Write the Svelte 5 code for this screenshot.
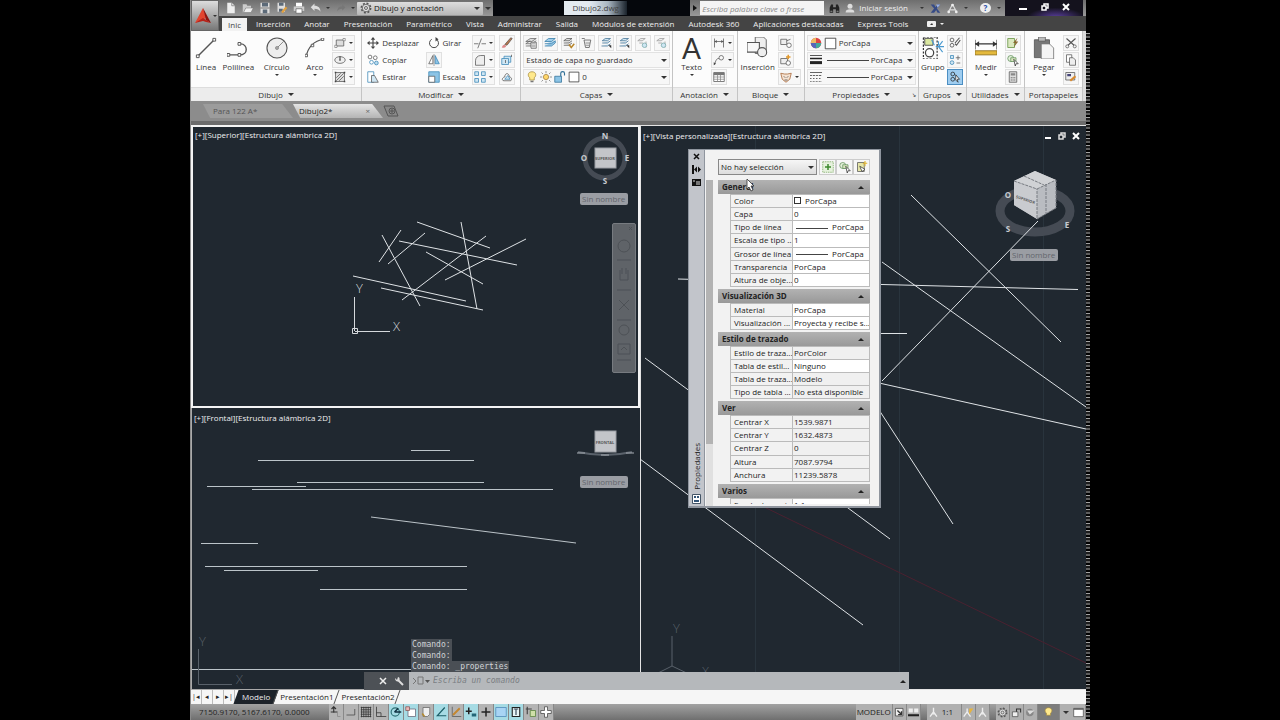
<script lang="ts">
  type Cell = { name: string; value: string; kind?: 'swatch' | 'line'; locked?: boolean };

  // Icon markup, drawn in a 16x16 box.
  const icons: Record<string, string> = {
    new: '<path d="M3 1h6l4 4v10H3z" fill="#eee"/><path d="M9 1v4h4" fill="none" stroke="#777"/>',
    open: '<path d="M1 3h5l1 2h5v3H5l-3 6H1z" fill="#ccc"/><path d="M5 8h10l-3 6H2z" fill="#eee" stroke="#777" stroke-width=".7"/>',
    save: '<path d="M2 1h12v14H2z" fill="#ddd"/><path d="M4 1h8v5H4zM5 10h6v5H5z" fill="#5c6a78"/><path d="M2 8h12" stroke="#555"/>',
    saveas: '<path d="M2 1h10v12H2z" fill="#ddd"/><path d="M4 1h6v4H4zM4 9h5v4H4z" fill="#5c6a78"/><path d="M8 14l6-7" stroke="#e0a040" stroke-width="3"/>',
    print: '<path d="M4 1h8v5H4z" fill="#fff"/><path d="M1 6h14v6H1z" fill="#ccc"/><path d="M4 9h8v6H4z" fill="#fff" stroke="#666"/>',
    undo: '<path d="M6 2L1 7l5 5V9c4 0 6 1 8 4 0-5-3-8-8-8z" fill="#ddd"/>',
    redo: '<path d="M10 2l5 5-5 5V9c-4 0-6 1-8 4 0-5 3-8 8-8z" fill="#777"/>',
    gear: '<circle cx="8" cy="8" r="6" fill="none" stroke="#555" stroke-width="2.500" stroke-dasharray="2.500 2.200"/><circle cx="8" cy="8" r="5" fill="#ddd" stroke="#555"/><circle cx="8" cy="8" r="2" fill="none" stroke="#444"/>',
    find: '<path d="M1 14V7l2-5h3v12zM10 14V2h3l2 5v7zM6 6h4v3H6z" fill="#222"/><path d="M2 12h3M11 12h3" stroke="#ccc"/>',
    user: '<circle cx="8" cy="5" r="4" fill="#ddd"/><path d="M1 15c0-4 3-5 7-5s7 1 7 5z" fill="#ddd"/>',
    exchange: '<path d="M1 2l5 6-5 6h5l3-4 2 4h4l-5-6 5-6h-4L8 6 6 2z" fill="#354a86"/><path d="M9 2h6l-4 5" fill="#9db4e6"/>',
    share: '<path d="M8 2L2 13M8 2l6 11M4 10h8" stroke="#ddd" fill="none" stroke-width="1.600"/><circle cx="8" cy="3" r="2" fill="#eee"/><circle cx="2.500" cy="13" r="2" fill="#eee"/><circle cx="13.500" cy="13" r="2" fill="#eee"/>',
    line: '<path d="M2 14L14 2" stroke="#555"/><path d="M1 13h2v2H1zM13 1h2v2h-2z" fill="#fff" stroke="#555" stroke-width=".7"/>',
    polyline: '<path d="M1 13h8c7 0 6-8 1-8" stroke="#555" fill="none"/><path d="M0 12h2v2H0zM8 12h2v2H8zM8 4h2v2H8z" fill="#fff" stroke="#555" stroke-width=".7"/>',
    circle: '<circle cx="8" cy="8" r="7.300" fill="#eee" stroke="#555" stroke-width=".8"/><path d="M8 8l5-5" stroke="#888" stroke-width=".7"/><path d="M7.200 7.200h1.600v1.600H7.200z" fill="#fff" stroke="#555" stroke-width=".6"/>',
    arc: '<path d="M1 15C2 8 7 2 15 1" stroke="#555" fill="none"/><path d="M0 13h2v2H0zM5 5h2v2H5zM13 0h2v2h-2z" fill="#fff" stroke="#555" stroke-width=".7"/>',
    rect: '<path d="M3 4h10v8H3z" fill="#ddd" stroke="#555"/><path d="M12 2h3v3h-3zM1 11h3v3H1z" fill="#fff" stroke="#555" stroke-width=".7"/>',
    ellipse: '<ellipse cx="8" cy="8" rx="7" ry="4.500" fill="#eee" stroke="#555"/><path d="M8 3v6M7 8h2" stroke="#444" stroke-width="1.500"/>',
    hatch: '<path d="M2 2h12v12H2z" fill="#ddd" stroke="#555"/><path d="M3 9l6-6M3 13L13 3M7 13l6-6" stroke="#555"/><path d="M1 1h2v2H1zM13 1h2v2h-2zM1 13h2v2H1zM13 13h2v2h-2z" fill="#444"/>',
    move: '<path d="M8 0l3 3.500H5zM8 16l3-3.500H5zM0 8l3.500-3v6zM16 8l-3.500-3v6z" fill="#444"/><path d="M8 3v10M3 8h10" stroke="#444" stroke-width="1.500"/>',
    copy: '<circle cx="4" cy="4" r="2.500" fill="#fff" stroke="#555"/><circle cx="11" cy="5" r="2.500" fill="#fff" stroke="#555"/><circle cx="6" cy="11" r="2.500" fill="#fff" stroke="#3a86b5"/><circle cx="12.500" cy="12" r="2.500" fill="#b9dcf0" stroke="#3a86b5"/>',
    stretch: '<path d="M1 1h8v14H1z" fill="#fff" stroke="#3a86b5"/><path d="M6 6h4l5 9H6z" fill="#cfe6f3" stroke="#555"/>',
    rotate: '<path d="M11 3a6 6 0 1 1-6 0" fill="none" stroke="#444" stroke-width="1.300"/><path d="M10 0l4 3-4 3z" fill="#444"/>',
    mirror: '<path d="M6.500 2v11H1z" fill="#fff" stroke="#555"/><path d="M9.500 2v11H15z" fill="#8cc4e6" stroke="#3a86b5"/><path d="M8 0v16" stroke="#555" stroke-width=".7"/>',
    scale: '<path d="M1 1h14v14H1z" fill="#8cc4e6" stroke="#3a86b5"/><path d="M1 7h8v8H1z" fill="#fff" stroke="#555"/>',
    trim: '<path d="M0 9h6M10 9h6M5 15l5-13" stroke="#555"/>',
    fillet: '<path d="M2 15V9c0-4 3-7 7-7h5v13z" fill="#eee" stroke="#555"/>',
    array: '<path d="M1 1h5v5H1zM10 1h5v5h-5zM1 10h5v5H1zM10 10h5v5h-5z" fill="#cfe6f3" stroke="#3a86b5"/>',
    erase: '<path d="M5 10L13 1l2 1-7 9z" fill="#b9794f" stroke="#444" stroke-width=".8"/><path d="M1 14c1-3 3-5 5-3s-1 4-5 3z" fill="#d88"/>',
    explode: '<path d="M1 6h9v8H1zM4 6V3h9v8h-3" fill="#cfe6f3" stroke="#3a86b5"/><path d="M6 8v4M14 1v3" stroke="#555"/>',
    offset: '<path d="M4 13h9c3-4-1-5-2-5 0-6-6-6-6 0-3 0-5 5-1 5z" fill="none" stroke="#555"/><path d="M5 11h7l-3-5z" fill="#cfe6f3" stroke="#3a86b5"/>',
    layers: '<path d="M1 6l6-4h8l-6 4zM1 9l6-4M1 9h8l6-4M1 12h8l6-4" fill="#ddd" stroke="#555" stroke-width=".9"/><path d="M8 7h7v8H8z" fill="#fff" stroke="#555"/><path d="M9 9h5M9 11h5M9 13h5" stroke="#666" stroke-width=".8"/>',
    layerBlue: '<path d="M1 6l5-4h9l-5 4zM1 9h9l5-4M1 12h9l5-4v-3" fill="#9fcdea" stroke="#2f78a6"/>',
    layerGold: '<path d="M1 5l4-3h7l-4 3zM1 8h7l4-3M1 11h7l4-3" fill="#ddd" stroke="#555"/><path d="M8 10l3 4 4-5" fill="none" stroke="#b8862b" stroke-width="2"/>',
    layerPlain: '<path d="M4 4h9l-2 10H6zM1 2h4" fill="#eee" stroke="#555"/><path d="M6 8h6M6 11h5" stroke="#777"/>',
    layerArrow: '<path d="M3 5l4-3h7l-4 3zM3 8h7l4-3M2 12h8l4-3" fill="#cfe6f3" stroke="#3f6f91"/><path d="M11 11l4 4v-4z" fill="#333"/>',
    layerGhost: '<path d="M1 5l4-3h6l-4 3zM3 8h5M12 6v8" fill="#eee" stroke="#999"/><circle cx="10" cy="11" r="3" fill="#cfe6f3" stroke="#7aa"/>',
    bulb: '<path d="M8 1c6 0 6 6 3 8v3H5V9C2 7 2 1 8 1z" fill="#ffe98c" stroke="#a58b3c"/><path d="M6 13h4v2H6z" fill="#777"/>',
    sun: '<circle cx="8" cy="8" r="3.500" fill="#ffd76b" stroke="#a5803c"/><path d="M8 0v3M8 13v3M0 8h3M13 8h3M2 2l2 2M12 12l2 2M14 2l-2 2M4 12l-2 2" stroke="#777"/>',
    lock: '<path d="M1 7h9v8H1z" fill="#8cc4e6" stroke="#2f6f97"/><path d="M9 7V3c0-3 5-3 5 0v3" fill="none" stroke="#2f6f97" stroke-width="1.500"/>',
    swatch: '<path d="M1.500 1.500h13v13h-13z" fill="#fff" stroke="#333"/>',
    dim: '<path d="M2 2v12M14 2v12M2 6h12" stroke="#555"/><path d="M2 6l3-2v4zM14 6l-3-2v4z" fill="#555"/>',
    leader: '<circle cx="11" cy="5" r="3" fill="none" stroke="#555"/><path d="M8 6C4 6 4 9 2 14" fill="none" stroke="#555"/><path d="M1 15l0-4 3 2z" fill="#444"/>',
    table: '<path d="M1 2h14v12H1z" fill="#fff" stroke="#555"/><path d="M1 4h14" stroke="#777" stroke-width="3"/><path d="M1 8h14M1 11h14M6 5v9M10 5v9" stroke="#888"/>',
    insert: '<path d="M6 0h6l2 2v10H6z" fill="#eee" stroke="#666" stroke-width=".7"/><path d="M0 4h9v7H0z" fill="#f8f8f8" stroke="#555" stroke-width=".8"/><circle cx="11" cy="11" r="3.300" fill="#eee" stroke="#555" stroke-width=".8"/>',
    block: '<path d="M1 3h8v7H1z" fill="#eee" stroke="#555"/><circle cx="12" cy="11" r="3" fill="#fff" stroke="#555"/><path d="M9 5l5-2" stroke="#555"/>',
    blockEdit: '<path d="M1 6h9v7H1z" fill="#eee" stroke="#555"/><circle cx="11" cy="12" r="3" fill="#fff" stroke="#555"/><path d="M11 1v6M8 4h6" stroke="#e39a2e" stroke-width="2"/>',
    tags: '<path d="M1 3l5 1h4l5-1-2 8-5 4-5-4z" fill="#f6e3d2" stroke="#a4602f"/><path d="M5 7l2 2M11 7L9 9M6 12h4" stroke="#444"/>',
    wheel: '<circle cx="8" cy="8" r="7" fill="#d44"/><path d="M8 8L1 8a7 7 0 0 1 7-7z" fill="#eb6"/><path d="M8 8h7a7 7 0 0 1-7 7z" fill="#4a9"/><path d="M8 8v7a7 7 0 0 1-7-7z" fill="#56b"/>',
    weights: '<path d="M0 2h16" stroke="#222"/><path d="M0 6h16" stroke="#222" stroke-width="2"/><path d="M0 11.500h16" stroke="#222" stroke-width="4"/>',
    types: '<path d="M0 2h16" stroke="#333"/><path d="M0 6h16" stroke="#333" stroke-dasharray="3 1"/><path d="M0 10h16" stroke="#333" stroke-dasharray="2 2"/><path d="M0 14h16" stroke="#333" stroke-dasharray="1 1"/>',
    group: '<path d="M1 0h10v16H1z" fill="none" stroke="#222" stroke-width=".8" stroke-dasharray="1.500 1"/><path d="M2 1h6v5H2z" fill="#dbe8a0" stroke="#555" stroke-width=".7"/><circle cx="5.500" cy="11.500" r="3" fill="#fff" stroke="#444" stroke-width=".9"/><path d="M12 3v3M10 7h6M12 7l3-4M12 7l3 4M9 6l-2-4" stroke="#4a9ad0" stroke-width=".8"/>',
    ungroup: '<circle cx="4" cy="4" r="2.500" fill="none" stroke="#444"/><circle cx="4" cy="11" r="2.500" fill="none" stroke="#444"/><path d="M8 8l6-7M8 9l2 2 5-7" stroke="#555" stroke-width="1.500" fill="none"/>',
    groupEdit: '<path d="M2 2h4v4H2z" fill="#cfe6f3" stroke="#3a86b5"/><circle cx="4" cy="11.500" r="2.500" fill="#cfe6f3" stroke="#3a86b5"/><path d="M9 5h6M12 2v6M10 12h5" stroke="#555"/>',
    groupPick: '<circle cx="5" cy="4" r="2.500" fill="none" stroke="#222"/><circle cx="5" cy="11" r="2.500" fill="none" stroke="#222"/><path d="M9 5l5 6-3 0 1 4-3-3z" fill="#fff" stroke="#222"/>',
    measure: '<path d="M0 2v7M16 2v7M0 5h16" stroke="#333" stroke-width=".8"/><path d="M0 5l3-2v4zM16 5l-3-2v4z" fill="#333"/><path d="M0 10h16v3H0z" fill="#e4b93c" stroke="#8d6d1a" stroke-width=".6"/>',
    quick: '<path d="M1 2h9v12H1z" fill="#dbe8c0" stroke="#5f8f3a"/><path d="M14 1l-6 7h3l-2 6 6-8h-3z" fill="#8a6b33"/>',
    pick: '<circle cx="5" cy="6" r="4" fill="#e4f0da" stroke="#5f8f5a"/><path d="M5 5h7v5H5z" fill="#dbe8c0" stroke="#5f8f5a"/><path d="M9 7l6 6h-3l-1 3z" fill="#fff" stroke="#333"/>',
    calc: '<path d="M3 1h10v14H3z" fill="#ddd" stroke="#555"/><path d="M5 3h6v3H5z" fill="#888"/><path d="M5 9h6M5 12h6" stroke="#666" stroke-dasharray="1.500 .8" stroke-width="1.500"/>',
    paste: '<path d="M1 2h11v13H1z" fill="#777" stroke="#555" stroke-width=".6"/><path d="M4 0h5v3H4z" fill="#bbb" stroke="#555" stroke-width=".5"/><path d="M6 5h6l3 3v8H6z" fill="#f4f4f4" stroke="#777" stroke-width=".6"/>',
    cut: '<path d="M2 2l10 9M14 2L4 11" stroke="#555" stroke-width="1.500"/><circle cx="3" cy="12.500" r="2" fill="none" stroke="#555"/><circle cx="13" cy="12.500" r="2" fill="none" stroke="#555"/>',
    pages: '<path d="M2 1h7v10H2z" fill="#fff" stroke="#555"/><path d="M6 5h5l3 3v7H6z" fill="#eee" stroke="#555"/>',
    match: '<path d="M1 2h12v10H1z" fill="#eee" stroke="#555"/><path d="M3 4h5v3H3z" fill="#447"/><path d="M7 13l7-6" stroke="#d98a2e" stroke-width="3"/>',
    addPick: '<path d="M1 1h14v14H1z" fill="#e6f2dd" stroke="#7aa860" stroke-dasharray="2 1"/><path d="M8 4v8M4 8h8" stroke="#3d8a2e" stroke-width="2"/>',
    quickSel: '<path d="M2 2h9v12H2z" fill="#e6e6a8" stroke="#555"/><path d="M5 7l7 4-4 3z" fill="#fff" stroke="#333"/><path d="M12 0v7M9 3h6" stroke="#e2b52e" stroke-width="1.500"/>',
    infer: '<path d="M5 1v8M2 4l3-3 3 3M1 8h9" stroke="#333" fill="none" stroke-width="1.500"/><path d="M10 8v6h4" stroke="#888" fill="none"/>',
    snap: '<path d="M2 12h11V4" stroke="#444" fill="none"/>',
    grid: '<path d="M1 2h14M1 5h14M1 8h14M1 11h14M1 14h14M2 1v14M5 1v14M8 1v14M11 1v14M14 1v14" stroke="#333"/>',
    ortho: '<path d="M2 1v13h13M2 9h6v5" stroke="#333" fill="none"/>',
    polar: '<circle cx="7" cy="8" r="5.500" fill="none" stroke="#2d6f74" stroke-width="1.500"/><path d="M6 8h9M6 8l5-5" stroke="#134" stroke-width="2"/>',
    osnap: '<path d="M4 4h10v10H4z" fill="#fff" stroke="#667"/><path d="M1 1h5v5H1z" fill="#e9b7b7" stroke="#855"/>',
    osnap3d: '<path d="M4 2h9v9l-3 3H4z" fill="#eee" stroke="#666"/><path d="M3 10l3 4" stroke="#b58a2e" stroke-width="2"/>',
    angle: '<path d="M13 2L3 13h12" stroke="#1a5d66" stroke-width="1.500" fill="none"/>',
    ducs: '<path d="M3 1v13h12" stroke="#555" fill="none"/><path d="M4 12L13 3" stroke="#c4872f" stroke-width="2.500"/>',
    dyn: '<path d="M5 2v9M1 7h8" stroke="#222" stroke-width="2"/><path d="M9 10h6v4H9z" fill="#267"/>',
    plus: '<path d="M8 2v12M2 8h12" stroke="#222" stroke-width="2"/>',
    square: '<path d="M1 2h14v12H1z" fill="#a8d4f4" stroke="#4b87b5"/>',
    props: '<path d="M3 2h10v12H3z" fill="#e8f4f6" stroke="#222" stroke-width="1.500"/><path d="M8 4v8M5 4h6" stroke="#345" stroke-width="1.500"/>',
    cycle: '<path d="M3 1v10M1 4h8" stroke="#444" stroke-width="1.500"/><path d="M7 6h7v8H7z" fill="#cfe0a8" stroke="#57803a"/>',
    cross: '<path d="M6 1h4v5h5v4h-5v5H6v-5H1V6h5z" fill="#fff" stroke="#444"/>',
    model: '<path d="M2 2h11v11H2z" fill="#eee" stroke="#333"/><path d="M5 5l6 6M11 6v5H6" stroke="#333" stroke-width="2" fill="none"/>',
    views: '<path d="M1 2h6v6H1zM9 2h6v6H9z" fill="#eee"/><path d="M0 12h16" stroke="#222" stroke-width="3"/>',
    scaleMan: '<path d="M8 1v6L3 14M8 7l5 7M5 10h6" stroke="#eee" stroke-width="2" fill="none"/>',
    scaleSun: '<path d="M6 2v5L1 14M6 7l5 7" stroke="#eee" stroke-width="2" fill="none"/><path d="M9 2h6L9 11z" fill="#e8b43c"/>',
    unlock: '<path d="M2 7h8v7H2z" fill="#eee" stroke="#444"/><path d="M8 7V3h6v5" fill="none" stroke="#333" stroke-width="1.500"/>',
    hardware: '<circle cx="7" cy="8" r="5.500" fill="#888"/><path d="M3 5l4 6 7-6" fill="#ddd"/>',
    clean: '<path d="M1 2h14v12H1z" fill="#fff" stroke="#444"/><path d="M1 3h14" stroke="#555" stroke-width="2"/>',
  };

  const menu = [
    'Inserción', 'Anotar', 'Presentación', 'Paramétrico', 'Vista', 'Administrar', 'Salida',
    'Módulos de extensión', 'Autodesk 360', 'Aplicaciones destacadas', 'Express Tools',
  ];

  const layerTools = [
    'layers', 'layerBlue', 'layerGold', 'layerPlain', 'layerArrow', 'layerArrow', 'layerGhost', 'layerGhost',
  ];

  const sections: { title: string; rows: Cell[] }[] = [
    {
      title: 'General',
      rows: [
        { name: 'Color', value: 'PorCapa', kind: 'swatch' },
        { name: 'Capa', value: '0' },
        { name: 'Tipo de línea', value: 'PorCapa', kind: 'line' },
        { name: 'Escala de tipo ...', value: '1' },
        { name: 'Grosor de línea', value: 'PorCapa', kind: 'line' },
        { name: 'Transparencia', value: 'PorCapa' },
        { name: 'Altura de obje...', value: '0' },
      ],
    },
    {
      title: 'Visualización 3D',
      rows: [
        { name: 'Material', value: 'PorCapa' },
        { name: 'Visualización ...', value: 'Proyecta y recibe s...' },
      ],
    },
    {
      title: 'Estilo de trazado',
      rows: [
        { name: 'Estilo de traza...', value: 'PorColor', locked: true },
        { name: 'Tabla de estil...', value: 'Ninguno' },
        { name: 'Tabla de traza...', value: 'Modelo', locked: true },
        { name: 'Tipo de tabla ...', value: 'No está disponible', locked: true },
      ],
    },
    {
      title: 'Ver',
      rows: [
        { name: 'Centrar X', value: '1539.9871', locked: true },
        { name: 'Centrar Y', value: '1632.4873', locked: true },
        { name: 'Centrar Z', value: '0', locked: true },
        { name: 'Altura', value: '7087.9794', locked: true },
        { name: 'Anchura', value: '11239.5878', locked: true },
      ],
    },
    { title: 'Varios', rows: [{ name: 'Escala de anot...', value: '1:1' }] },
  ];

  // x1, y1, x2, y2
  const topLines = [
    [417, 222, 490, 248], [461, 222, 477, 309], [399, 241, 517, 265], [486, 236, 402, 300],
    [526, 239, 445, 280], [426, 252, 483, 284], [382, 235, 420, 306], [401, 230, 379, 262],
    [425, 233, 388, 264], [353, 276, 466, 301], [381, 288, 483, 310],
  ];
  const frontLines = [
    [411, 450.5, 450, 450.5], [258, 460.5, 474, 460.5], [297, 482.5, 484, 482.5], [207, 486.5, 306, 486.5],
    [252, 489.5, 553, 489.5], [371, 517, 576, 543], [201, 543.5, 258, 543.5], [205, 566.5, 467, 566.5],
    [224, 570.5, 318, 570.5], [320, 589.5, 467, 589.5], [192, 669.5, 411, 669.5],
  ];
  const customLines = [
    [911, 195, 1061, 342], [1038, 221, 882, 381], [882, 262, 1086, 407], [678, 279, 882, 284.5],
    [882, 284.5, 1078, 289.5], [860, 333.5, 907, 333.5], [870, 381, 1086, 429], [870, 396, 953, 524],
    [645, 358, 890, 539], [640, 459, 863, 625],
  ];

  const toggles = [
    ['infer', false], ['snap', false], ['grid', false], ['ortho', false], ['polar', true], ['osnap', true],
    ['osnap3d', false], ['angle', true], ['ducs', false], ['dyn', true], ['plus', false], ['square', true],
    ['props', true], ['cycle', false], ['cross', false],
  ] as [string, boolean][];

  let command = $state('');
</script>

{#snippet icon(name: string, size = 11)}
  <svg class="icon" width={size} height={size} viewBox="0 0 16 16" aria-hidden="true">{@html icons[name]}</svg>
{/snippet}

{#snippet tool(name: string, label = '', drop = false)}
  <button class="tool" class:framed={!label} aria-label={label || name}>
    {@render icon(name, 12)}
    {#if label}<span>{label}</span>{/if}
    {#if drop}<i class="drop small"></i>{/if}
  </button>
{/snippet}

{#snippet big(name: string, label: string, drop = false, size = 22)}
  <button class="big">
    <span class="big-icon">
      {#if name === 'A'}<b class="letter">A</b>{:else}{@render icon(name, size)}{/if}
    </span>
    <span>{label}</span>
    {#if drop}<i class="drop small"></i>{/if}
  </button>
{/snippet}

{#snippet caption(label: string, drop = true)}
  <h2 class="caption">{label}{#if drop}<i class="drop"></i>{/if}</h2>
{/snippet}

{#snippet lines(list: number[][])}
  {#each list as [x1, y1, x2, y2]}
    <line {x1} {y1} {x2} {y2} />
  {/each}
{/snippet}

<div class="screen">
  <div class="app">
    <header class="top">
      <button class="logo" aria-label="Menú de la aplicación">
        <svg width="18" height="18" viewBox="0 0 18 18">
          <path d="M1 16L9 1l3 10z" fill="#e2452f" />
          <path d="M9 1l8 15-5-3z" fill="#8e1410" />
          <path d="M1 16l8-5 8 5-5-1-3-1z" fill="#b82219" />
        </svg>
        <i class="drop"></i>
      </button>

      <div class="titlebar">
        <div class="quick">
          {#each ['new', 'open', 'save', 'saveas', 'print', 'undo'] as name}
            <button aria-label={name}>{@render icon(name, 12)}</button>
          {/each}
          <i class="drop small"></i>
          <button aria-label="redo">{@render icon('redo', 10)}</button>
          <i class="drop small"></i>
        </div>
        <label class="combo workspace">
          {@render icon('gear', 12)}
          <select aria-label="Espacio de trabajo"><option>Dibujo y anotación</option></select>
          <i class="drop"></i>
        </label>
        <i class="drop more"></i>
        <div class="title"><span>Dibujo2.dwg</span></div>
        <i class="play"></i>
        <input class="search" type="search" placeholder="Escriba palabra clave o frase" aria-label="Buscar" />
        <button class="find" aria-label="Buscar">{@render icon('find', 11)}</button>
        <button class="sign">{@render icon('user', 10)} Iniciar sesión</button>
        <div class="services">
          <i class="drop small"></i>
          <button aria-label="Exchange">{@render icon('exchange', 11)}</button>
          <button aria-label="Autodesk 360">{@render icon('share', 11)}</button>
          <i class="drop small"></i>
          <button class="help" aria-label="Ayuda">?</button>
          <i class="drop small"></i>
        </div>
        <div class="window">
          <button aria-label="Minimizar"><svg width="10" height="8" viewBox="0 0 10 8"><path d="M1 6h8" stroke="#fff" stroke-width="2" /></svg></button>
          <button aria-label="Restaurar"><svg width="8" height="8" viewBox="0 0 8 8"><path d="M1 3h4v4H1zM3 3V1h4v4H5" fill="none" stroke="#fff" stroke-width="1.500" /></svg></button>
          <button aria-label="Cerrar"><svg width="8" height="8" viewBox="0 0 8 8"><path d="M1 1l6 6M7 1L1 7" stroke="#fff" stroke-width="2" /></svg></button>
        </div>
      </div>

      <nav class="menu">
        <button class="active">Inic</button>
        {#each menu as item}
          <button>{item}</button>
        {/each}
        <button class="camera" aria-label="Cinta">
          <svg width="9" height="6" viewBox="0 0 9 6"><rect width="9" height="6" rx="1" fill="#eee" /><path d="M3 4l2-2 1 2z" fill="#333" /></svg>
          <i class="drop small"></i>
        </button>
      </nav>
    </header>

    <div class="ribbon">
      <section class="panel">
        <div class="tools draw">
          {@render big('line', 'Línea')}
          {@render big('polyline', 'Polilínea')}
          {@render big('circle', 'Círculo', true)}
          {@render big('arc', 'Arco', true, 20)}
          <div class="stack">
            {@render tool('rect', '', true)}
            {@render tool('ellipse', '', true)}
            {@render tool('hatch', '', true)}
          </div>
        </div>
        {@render caption('Dibujo')}
      </section>

      <section class="panel">
        <div class="tools modify">
          <div class="stack">
            {@render tool('move', 'Desplazar')}
            {@render tool('copy', 'Copiar')}
            {@render tool('stretch', 'Estirar')}
          </div>
          <div class="stack">
            {@render tool('rotate', 'Girar')}
            {@render tool('mirror')}
            {@render tool('scale', 'Escala')}
          </div>
          <div class="stack">
            {@render tool('trim', '', true)}
            {@render tool('fillet', '', true)}
            {@render tool('array', '', true)}
          </div>
          <div class="stack">
            {@render tool('erase')}
            {@render tool('explode')}
            {@render tool('offset')}
          </div>
        </div>
        {@render caption('Modificar')}
      </section>

      <section class="panel">
        <div class="tools rows">
          <div class="strip">
            {#each layerTools as name}
              {@render tool(name)}
            {/each}
          </div>
          <label class="combo">
            <select aria-label="Estado de capa"><option>Estado de capa no guardado</option></select>
            <i class="drop"></i>
          </label>
          <label class="combo">
            {@render icon('bulb', 12)}
            {@render icon('sun', 12)}
            {@render icon('lock', 12)}
            {@render icon('swatch', 12)}
            <select aria-label="Capa"><option>0</option></select>
            <i class="drop"></i>
          </label>
        </div>
        {@render caption('Capas')}
      </section>

      <section class="panel">
        <div class="tools">
          {@render big('A', 'Texto', true)}
          <div class="stack">
            {@render tool('dim', '', true)}
            {@render tool('leader', '', true)}
            {@render tool('table')}
          </div>
        </div>
        {@render caption('Anotación')}
      </section>

      <section class="panel">
        <div class="tools">
          {@render big('insert', 'Inserción')}
          <div class="stack">
            {@render tool('block')}
            {@render tool('blockEdit')}
            {@render tool('tags', '', true)}
          </div>
        </div>
        {@render caption('Bloque')}
      </section>

      <section class="panel">
        <div class="tools rows props">
          <label class="combo">
            {@render icon('wheel', 12)}
            {@render icon('swatch', 13)}
            <select aria-label="Color"><option>PorCapa</option></select>
            <i class="drop"></i>
          </label>
          {#each ['weights', 'types'] as name}
            <label class="combo">
              {@render icon(name, 12)}
              <i class="rule"></i>
              <select aria-label={name}><option>PorCapa</option></select>
              <i class="drop"></i>
            </label>
          {/each}
        </div>
        {@render caption('Propiedades')}
        <i class="launcher">↘</i>
      </section>

      <section class="panel">
        <div class="tools">
          {@render big('group', 'Grupo')}
          <div class="stack last-on">
            {@render tool('ungroup')}
            {@render tool('groupEdit')}
            {@render tool('groupPick')}
          </div>
        </div>
        {@render caption('Grupos')}
      </section>

      <section class="panel">
        <div class="tools">
          {@render big('measure', 'Medir', true)}
          <div class="stack">
            {@render tool('quick')}
            {@render tool('pick')}
            {@render tool('calc')}
          </div>
        </div>
        {@render caption('Utilidades')}
      </section>

      <section class="panel">
        <div class="tools">
          {@render big('paste', 'Pegar', true)}
          <div class="stack">
            {@render tool('cut')}
            {@render tool('pages')}
            {@render tool('match')}
          </div>
        </div>
        {@render caption('Portapapeles', false)}
      </section>
    </div>

    <div class="files">
      <button class="file">Para 122 A*</button>
      <button class="file current">Dibujo2* <span>×</span></button>
      <button class="add" aria-label="Nuevo dibujo">
        <svg width="16" height="12" viewBox="0 0 16 12">
          <path d="M1 1h10l4 10H5z" fill="#8a8a8a" stroke="#555" />
          <circle cx="9" cy="6" r="3" fill="none" stroke="#555" />
          <path d="M9 4v4M7 6h4" stroke="#555" />
        </svg>
      </button>
    </div>

    <main class="work">
      <div class="left">
        <section class="view active">
          <svg class="canvas" viewBox="193 127 445 279" preserveAspectRatio="xMidYMid slice">
            <g class="geometry">{@render lines(topLines)}</g>
            <path d="M354.500 297v34M355 331.500h35M352.500 328.500h5v5h-5z" class="axis" />
            <text x="356" y="293" class="axis-name">Y</text>
            <text x="393" y="331" class="axis-name">X</text>
            <circle cx="605" cy="158" r="20" class="ring" />
            <rect x="595" y="148" width="21" height="20" class="face" />
            <text x="605" y="160" class="face-name">SUPERIOR</text>
            <text x="605" y="139" class="compass">N</text>
            <text x="605" y="184" class="compass">S</text>
            <text x="584" y="161" class="compass">O</text>
            <text x="627" y="161" class="compass">E</text>
          </svg>
          <h3>[+][Superior][Estructura alámbrica 2D]</h3>
          <button class="ucs">Sin nombre</button>
          <div class="navbar">
            <svg viewBox="0 0 22 148" width="22" height="148">
              <g fill="none" stroke="#4d5156">
                <path d="M16 3l3 3M19 3l-3 3M4 36h14M4 66h14M4 96h14M4 136h14" />
                <circle cx="11" cy="22" r="6" />
                <path d="M7 46v10h8V46M9 44v6M13 44v6" />
                <path d="M6 76l10 10M16 76L6 86" />
                <circle cx="11" cy="106" r="5" />
                <path d="M5 120h12v10H5zM8 126l3-3 3 3" />
              </g>
            </svg>
          </div>
        </section>

        <section class="view">
          <svg class="canvas" viewBox="192 408 448 281" preserveAspectRatio="xMidYMid slice">
            <g class="geometry soft">{@render lines(frontLines)}</g>
            <path d="M198.500 649v35.500H232" class="axis dim" />
            <text x="199" y="646" class="axis-name dim">Y</text>
            <text x="236" y="684" class="axis-name dim">X</text>
            <path d="M578 452q27 6 54 0" fill="none" stroke="#5a626b" stroke-width="2" />
            <path d="M577 453h8M601 455h8M626 453h8" stroke="#a5abb2" />
            <rect x="595" y="431" width="21" height="21" class="face" />
            <text x="605" y="444" class="face-name">FRONTAL</text>
          </svg>
          <h3>[+][Frontal][Estructura alámbrica 2D]</h3>
          <button class="ucs">Sin nombre</button>
        </section>
      </div>

      <section class="view custom">
        <svg class="canvas" viewBox="641 126 445 563" preserveAspectRatio="xMidYMid slice">
          <path d="M755.500 126v563M899.500 126v563M1043.500 126v563" stroke="#29343d" />
          <path d="M760 505L1086 663" stroke="#4a2130" />
          <ellipse cx="1035" cy="211" rx="35" ry="21" fill="none" stroke="#454b54" stroke-width="9" />
          <g class="geometry">{@render lines(customLines)}</g>
          <path d="M1014 181l21-10 21 9v28l-19 11-23-14z" fill="#b9bcc1" />
          <path d="M1014 181l21-10 21 9-19 9z" fill="#d0d2d5" />
          <path d="M1014 181l23 8v30l-23-14z" fill="#c9cbcf" />
          <path d="M1037 189l19-9v28l-19 11zM1014 181l23 8M1024 176l20 9M1046 184v29" fill="none" stroke="#777b81" stroke-dasharray="3 1" />
          <text x="1025" y="201" class="face-name" transform="rotate(18 1025 201)">SUPERIOR</text>
          <text x="1008" y="198" class="compass">O</text>
          <text x="1008" y="232" class="compass">S</text>
          <text x="1067" y="228" class="compass">E</text>
          <path d="M672 636v30l-20 10M672 666l21 10" class="axis dim" />
          <text x="673" y="633" class="axis-name dim">Y</text>
          <text x="702" y="676" class="axis-name dim">X</text>
        </svg>
        <h3>[+][Vista personalizada][Estructura alámbrica 2D]</h3>
        <div class="view-window">
          <button aria-label="Minimizar vista"><svg width="8" height="8" viewBox="0 0 8 8"><path d="M1 6h6" stroke="#fff" stroke-width="2" /></svg></button>
          <button aria-label="Restaurar vista"><svg width="8" height="8" viewBox="0 0 8 8"><path d="M1 3h4v4H1zM3 3V1h4v4H5" fill="none" stroke="#ddd" stroke-width="1.500" /></svg></button>
          <button aria-label="Cerrar vista"><svg width="8" height="8" viewBox="0 0 8 8"><path d="M1 1l6 6M7 1L1 7" stroke="#fff" stroke-width="2" /></svg></button>
        </div>
        <button class="ucs">Sin nombre</button>

        <aside class="palette">
          <div class="spine">
            <svg width="9" height="9" viewBox="0 0 9 9"><path d="M2 2l5 5M7 2L2 7" stroke="#111" stroke-width="1.500" /></svg>
            <svg width="9" height="9" viewBox="0 0 9 9"><path d="M1 0v9" stroke="#111" stroke-width="2" /><path d="M2 4.500l3-3v6zM9 4.500l-3-3v6z" fill="#111" /></svg>
            <svg width="9" height="9" viewBox="0 0 9 9"><path d="M0 1h9v7H0z" fill="#111" /><path d="M4 4h4M4 6h4M1 3h2" stroke="#ddd" /></svg>
            <strong>Propiedades</strong>
            <svg width="9" height="10" viewBox="0 0 9 10"><path d="M.5.5h8v9h-8z" fill="#fff" stroke="#456" /><path d="M2 3h2M5 3h2M2 7h5" stroke="#357" stroke-width="2" /></svg>
          </div>
          <div class="scroll"><i></i></div>
          <div class="sheet">
            <div class="pick">
              <label class="combo">
                <select aria-label="Selección"><option>No hay selección</option></select>
                <i class="drop"></i>
              </label>
              {@render tool('addPick')}
              {@render tool('pick')}
              {@render tool('quickSel')}
            </div>
            {#each sections as section}
              <h4>{section.title}<i class="up"></i></h4>
              <table style:height="{Math.round((section.rows.length * 40) / 3)}px">
                <tbody>
                  {#each section.rows as row}
                    <tr>
                      <th scope="row">{row.name}</th>
                      <td class:locked={row.locked}>
                        {#if row.kind === 'swatch'}<i class="box"></i>{/if}
                        {#if row.kind === 'line'}<i class="rule"></i>{/if}
                        {row.value}
                      </td>
                    </tr>
                  {/each}
                </tbody>
              </table>
            {/each}
          </div>
          <svg class="pointer" width="9" height="14" viewBox="0 0 9 14">
            <path d="M1 1v10l2-2 2 4 2-1-2-4h3z" fill="#fff" stroke="#333" stroke-width=".8" />
          </svg>
        </aside>
      </section>

      <div class="console">
        <ol>
          <li>Comando:</li>
          <li>Comando:</li>
          <li>Comando: _properties</li>
        </ol>
        <div class="prompt">
          <div class="grip">
            <svg width="8" height="8" viewBox="0 0 8 8"><path d="M1 1l6 6M7 1L1 7" stroke="#eee" stroke-width="1.500" /></svg>
            <svg width="10" height="10" viewBox="0 0 10 10"><path d="M4 4l5 5" stroke="#ddd" stroke-width="2" /><path d="M1 2l2 2 1-3C6 1 6 4 5 5 3 6 1 5 1 2z" fill="#ddd" /></svg>
          </div>
          <label>
            <svg width="18" height="10" viewBox="0 0 18 10"><path d="M1 2l3 3-3 3M6 1h5v7H6z" fill="none" stroke="#777" /><path d="M13 4h5l-2.500 3z" fill="#555" /></svg>
            <input bind:value={command} placeholder="Escriba un comando" aria-label="Comando" />
            <i class="up"></i>
          </label>
        </div>
      </div>
    </main>

    <div class="layouts">
      <div class="steps">
        <button aria-label="Primera">|◂</button>
        <button aria-label="Anterior">◂</button>
        <button aria-label="Siguiente">▸</button>
        <button aria-label="Última">▸|</button>
      </div>
      <button class="layout on">Modelo</button>
      <button class="layout">Presentación1</button>
      <button class="layout">Presentación2</button>
    </div>

    <footer class="status">
      <output>7150.9170, 5167.6170, 0.0000</output>
      <div class="toggles">
        {#each toggles as [name, on]}
          <button class:on aria-pressed={on} aria-label={name}>{@render icon(name, 12)}</button>
        {/each}
      </div>
      <div class="modes">
        <button>MODELO</button>
        <button aria-label="Modelo">{@render icon('model', 11)}</button>
        <button aria-label="Vistas">{@render icon('views', 11)}</button>
      </div>
      <div class="modes">
        <button class="scale">{@render icon('scaleMan', 11)} 1:1</button>
        <button aria-label="Anotaciones">{@render icon('scaleSun', 11)}</button>
        <button aria-label="Escala automática">{@render icon('scaleMan', 11)}</button>
      </div>
      <div class="modes end">
        {#each ['gear', 'unlock', 'hardware', 'bulb'] as name}
          <button class:lit={name === 'bulb'} aria-label={name}>{@render icon(name, 11)}</button>
        {/each}
        <i class="drop"></i>
        <button aria-label="Limpiar pantalla">{@render icon('clean', 11)}</button>
      </div>
    </footer>
  </div>
  <div class="edge"></div>
</div>

<style>
  :global(body) {
    margin: 0;
    background: #000;
  }

  .screen {
    box-sizing: border-box;
    display: flex;
    height: 100vh;
    padding: 0 190px;
    overflow: hidden;
    font: 8px/10px 'Open Sans', 'Noto Sans', sans-serif;
    color: #333;
    background: #000;
  }

  .app {
    flex: 1;
    display: flex;
    flex-direction: column;
    min-width: 0;
    border-left: 1px solid #8b8b8b;
  }

  .edge {
    width: 4px;
    margin-top: 31px;
    background: repeating-linear-gradient(#000 0 2px, #ccc 2px 3px, #222 3px 5px, #777 5px 7px);
    opacity: 0.8;
  }

  button,
  select,
  input {
    margin: 0;
    padding: 0;
    border: 0;
    font: inherit;
    color: inherit;
    background: none;
  }

  button {
    white-space: nowrap;
  }

  h2,
  h3,
  h4,
  ol {
    margin: 0;
    padding: 0;
    font: inherit;
    list-style: none;
  }

  .icon {
    flex: none;
    display: block;
  }

  .drop {
    flex: none;
    width: 0;
    height: 0;
    border: 3px solid transparent;
    border-top-color: #333;
    border-bottom: 0;
  }

  .drop.small {
    border-width: 2px;
    border-bottom: 0;
  }

  .up {
    width: 0;
    height: 0;
    border: 3px solid transparent;
    border-bottom-color: #222;
    border-top: 0;
  }

  .play {
    margin: 0 3px;
    border: 3px solid transparent;
    border-left: 4px solid #111;
    border-right: 0;
  }

  .combo {
    display: flex;
    align-items: center;
    gap: 2px;
    min-width: 0;
  }

  .combo select {
    flex: 1;
    min-width: 0;
    appearance: none;
    outline: 0;
  }

  .rule {
    flex: none;
    display: inline-block;
    height: 1px;
    background: #444;
    vertical-align: middle;
  }

  /* title bar and menu */
  .top {
    display: grid;
    grid-template: 16px 15px / 28px minmax(0, 1fr);
    background: #444;
  }

  .logo {
    grid-row: 1 / 3;
    display: flex;
    align-items: center;
    justify-content: center;
    gap: 1px;
    border: 1px solid #666;
    background: linear-gradient(#ddd, #777);
  }

  .logo .drop {
    border-width: 2px;
    border-bottom: 0;
  }

  .titlebar {
    display: flex;
    align-items: center;
    background: linear-gradient(#6e6e6e, #999);
  }

  .quick {
    display: flex;
    align-items: center;
    padding-left: 3px;
  }

  .quick button {
    width: 17px;
    display: flex;
    justify-content: center;
  }

  .quick .drop {
    margin: 0 2px;
  }

  .workspace {
    width: 120px;
    height: 13px;
    padding: 0 3px;
    border-radius: 1px;
    color: #111;
    background: linear-gradient(#ddd, #b8b8b8);
  }

  .more {
    margin: 0 2px;
  }

  .title {
    flex: 1;
    align-self: stretch;
    display: flex;
    align-items: center;
    justify-content: center;
    min-width: 0;
    background: #05070c;
  }

  .title span {
    margin-left: 8px;
    padding: 2px 8px;
    color: #444;
    background: linear-gradient(90deg, #e3eaf0 40%, #a9b6c1 70%, #1a222b);
  }

  .search {
    width: 124px;
    height: 14px;
    box-sizing: border-box;
    padding: 0 2px;
    color: #333;
    font-style: italic;
    background: #f4f4f4;
    appearance: none;
  }

  .search::placeholder {
    color: #888;
  }

  .find {
    padding: 0 5px;
  }

  .sign {
    display: flex;
    align-items: center;
    gap: 4px;
    color: #f0f0f0;
  }

  .services {
    display: flex;
    align-items: center;
    gap: 6px;
    padding: 0 4px 0 12px;
  }

  .help {
    width: 11px;
    margin-left: 6px;
    border-radius: 50%;
    font-weight: 700;
    color: #2a4fa8;
    background: #eee;
  }

  .window {
    align-self: stretch;
    display: flex;
    align-items: center;
    justify-content: space-around;
    width: 78px;
    margin-right: 3px;
    padding: 0 6px;
    box-sizing: border-box;
    background: radial-gradient(ellipse at 65% 110%, #5b3fa0, #14121d 40%);
  }

  .menu {
    display: flex;
    align-items: stretch;
    padding-left: 3px;
    color: #eee;
    overflow: hidden;
  }

  .menu button {
    padding: 0 7px;
  }

  .menu .active {
    margin: 2px 2px 0 0;
    padding: 0 6px;
    color: #444;
    background: #f2f2f2;
  }

  .menu .camera {
    display: flex;
    align-items: center;
    gap: 4px;
    margin-left: 5px;
  }

  .camera .drop {
    border-top-color: #eee;
  }

  /* ribbon */
  .ribbon {
    display: grid;
    grid-template-columns:
      minmax(0, 171fr) minmax(0, 159fr) minmax(0, 151fr) minmax(0, 65fr) minmax(0, 67fr)
      minmax(0, 114fr) minmax(0, 48fr) minmax(0, 58fr) minmax(0, 58fr);
    height: 70px;
    padding-right: 3px;
    background: #ddd;
  }

  .panel {
    position: relative;
    display: flex;
    flex-direction: column;
    box-sizing: border-box;
    border-right: 1px solid #c4c4c4;
    background: #fcfcfc;
  }

  .tools {
    flex: 1;
    display: flex;
    justify-content: center;
    padding-top: 4px;
  }

  .caption {
    display: flex;
    align-items: center;
    justify-content: center;
    gap: 5px;
    height: 13px;
    border-top: 1px solid #ddd;
    background: #ececec;
  }

  .launcher {
    position: absolute;
    right: 2px;
    bottom: 1px;
    font-size: 6px;
  }

  .big {
    display: flex;
    flex-direction: column;
    align-items: center;
    flex: 1;
    min-width: 0;
  }

  .big-icon {
    display: flex;
    align-items: center;
    height: 26px;
    margin-bottom: 1px;
  }

  .big .drop {
    margin-top: 2px;
  }

  .letter {
    font: 400 28px/22px Lato, sans-serif;
    color: #333;
  }

  .draw {
    display: grid;
    grid-template-columns: 30fr 34fr 42fr 34fr 29fr;
  }

  .stack {
    display: flex;
    flex-direction: column;
    gap: 1px;
    padding-right: 3px;
  }

  .tool {
    display: flex;
    align-items: center;
    gap: 3px;
    height: 16px;
    padding: 0 2px;
  }

  .tool.framed {
    align-self: flex-start;
    box-sizing: border-box;
    padding: 0 1px;
    border: 1px solid #e0e0e0;
    background: #f7f7f7;
  }

  .last-on .tool:last-child {
    border-color: #4b8ec2;
    background: #9fcdf0;
  }

  .modify {
    justify-content: space-between;
    padding: 4px 2px 0 3px;
  }

  .rows {
    flex-direction: column;
    justify-content: flex-start;
    gap: 1px;
    padding: 4px 2px 0;
  }

  .rows .combo {
    height: 16px;
    box-sizing: border-box;
    padding: 0 2px;
    border: 1px solid #e2e2e2;
    background: #f7f7f7;
  }

  .strip {
    display: flex;
    justify-content: space-between;
    height: 16px;
  }

  .props .rule {
    width: 42px;
    margin-left: 3px;
  }

  /* drawing tabs */
  .files {
    display: flex;
    align-items: center;
    height: 20px;
    padding-left: 12px;
    background: #8c8c8c;
  }

  .file {
    width: 90px;
    height: 14px;
    padding-left: 10px;
    text-align: left;
    color: #555;
    background: #9c9c9c;
    clip-path: polygon(0 0, 88% 0, 100% 100%, 8% 100%);
  }

  .file.current {
    display: flex;
    justify-content: space-between;
    align-items: center;
    padding: 0 13px 0 6px;
    color: #222;
    background: linear-gradient(#e4e4e4, #b4b4b4);
  }

  .file.current span {
    color: #666;
  }

  .add {
    display: flex;
  }

  /* viewports */
  .work {
    position: relative;
    flex: 1;
    display: grid;
    grid-template-columns: minmax(0, 449fr) minmax(0, 446fr);
    min-height: 0;
    padding-top: 4px;
    background: #6c6c6c;
  }

  .left {
    display: grid;
    grid-template-rows: minmax(0, 283fr) minmax(0, 282fr);
    min-height: 0;
  }

  .view {
    position: relative;
    overflow: hidden;
    border: solid #aaa;
    border-width: 0 0 1px 1px;
    background: #202830;
  }

  .view.active {
    border: 2px solid #f4f4f4;
  }

  .view.custom {
    border-width: 1px 0 1px 1px;
    border-color: #e4e4e4;
  }

  .canvas {
    position: absolute;
    inset: 0;
    width: 100%;
    height: 100%;
  }

  .view h3 {
    position: relative;
    padding: 5px 2px;
    color: #f0f0f0;
  }

  .view.active h3 {
    padding-top: 3px;
  }

  .geometry {
    stroke: #dfe3e6;
    stroke-width: 1;
  }

  .geometry.soft {
    stroke: #bcc4c9;
  }

  .axis {
    fill: none;
    stroke: #d5d9dc;
  }

  .axis.dim {
    stroke: #59616a;
  }

  .axis-name {
    font: 300 13px 'Open Sans', sans-serif;
    fill: #d5d9dc;
  }

  .axis-name.dim {
    fill: #59616a;
  }

  .ring {
    fill: none;
    stroke: #454b54;
    stroke-width: 5;
  }

  .face {
    fill: #c3c5c9;
    stroke: #9a9da3;
  }

  .face-name {
    font: 700 4px 'Open Sans', sans-serif;
    fill: #555;
    text-anchor: middle;
  }

  .compass {
    font: 700 8px 'Open Sans', sans-serif;
    fill: #c8cbd0;
    text-anchor: middle;
  }

  .ucs {
    position: absolute;
    top: 66px;
    right: 10px;
    width: 48px;
    height: 12px;
    padding-left: 2px;
    border-radius: 2px;
    text-align: left;
    line-height: 12px;
    color: #62666c;
    background: #9a9da3;
  }

  .view:not(.active) .ucs {
    top: 68px;
    right: 12px;
  }

  .view.custom .ucs {
    top: 123px;
    right: 28px;
  }

  .navbar {
    position: absolute;
    top: 96px;
    right: 2px;
    width: 22px;
    border: 1px solid #777b80;
    border-radius: 2px;
    background: #5f6368;
  }

  .navbar svg {
    display: block;
  }

  .view-window {
    position: absolute;
    top: 6px;
    right: 6px;
    display: flex;
    gap: 6px;
  }

  .view-window button {
    display: flex;
  }

  /* properties palette */
  .palette {
    position: absolute;
    top: 23px;
    left: 47px;
    display: flex;
    box-sizing: border-box;
    width: 193px;
    height: 359px;
    border: 1px solid #8f959e;
    border-right-width: 2px;
    border-bottom-width: 2px;
    color: #222;
    background: #f2f2f2;
  }

  .spine {
    display: flex;
    flex-direction: column;
    align-items: center;
    gap: 4px;
    width: 15px;
    padding: 2px 0;
    border-right: 1px solid #8f959e;
    background: #c2c5cb;
  }

  .spine strong {
    margin-top: auto;
    font-weight: 400;
    writing-mode: vertical-rl;
    transform: rotate(180deg);
  }

  .scroll {
    width: 7px;
    margin: 30px 5px 0 1px;
    background: #e0e0e0;
  }

  .scroll i {
    display: block;
    height: 81%;
    background: #b3b3b3;
  }

  .sheet {
    flex: 1;
    min-width: 0;
    margin: 9px 9px 2px 0;
    overflow: hidden;
  }

  .pick {
    display: flex;
    height: 16px;
    margin-bottom: 5px;
  }

  .pick .combo {
    flex: 1;
    margin-right: 2px;
    padding: 0 2px;
    border: 1px solid #888;
    background: linear-gradient(#f6f6f6, #ddd);
  }

  .pick .tool.framed {
    width: 17px;
    justify-content: center;
    border-color: #ccc;
  }

  .sheet h4 {
    display: flex;
    align-items: center;
    justify-content: space-between;
    height: 14px;
    padding: 0 6px 0 4px;
    font-weight: 700;
    background: linear-gradient(#b2b2b2, #999);
  }

  .sheet table {
    width: calc(100% - 12px);
    margin: 0 0 2px 12px;
    border-collapse: collapse;
    table-layout: fixed;
  }

  .sheet th,
  .sheet td {
    box-sizing: border-box;
    padding: 0 0 0 3px;
    border: 1px solid #bbb;
    font-weight: 400;
    text-align: left;
    white-space: nowrap;
    overflow: hidden;
  }

  .sheet th {
    width: 62px;
  }

  .sheet td {
    padding-left: 1px;
    background: #fff;
  }

  .sheet td.locked {
    background: #f0f0f0;
  }

  .sheet .rule {
    width: 32px;
    margin: 0 2px;
  }

  .box {
    display: inline-block;
    width: 5px;
    height: 5px;
    margin-right: 2px;
    border: 1px solid #333;
  }

  .pointer {
    position: absolute;
    top: 28px;
    left: 57px;
  }

  /* command line */
  .console {
    position: absolute;
    bottom: 0;
    left: 173px;
    width: 545px;
    font-family: 'DejaVu Sans Mono', 'Liberation Mono', monospace;
    font-size: 8px;
  }

  .console ol {
    display: flex;
    flex-direction: column;
    align-items: flex-start;
    padding-left: 47px;
    line-height: 11px;
  }

  .console li {
    padding: 0 1px;
    color: #d0d3d6;
    background: #4a4f55;
  }

  .prompt {
    display: flex;
    height: 18px;
  }

  .grip {
    display: flex;
    align-items: center;
    justify-content: flex-end;
    gap: 7px;
    width: 45px;
    padding-right: 5px;
    box-sizing: border-box;
    background: #4d5156;
  }

  .prompt label {
    flex: 1;
    display: flex;
    align-items: center;
    gap: 3px;
    padding: 0 3px;
    background: #b5b8bb;
  }

  .prompt input {
    flex: 1;
    font-style: italic;
    outline: 0;
  }

  .prompt input::placeholder {
    color: #7b7f83;
  }

  /* layout tabs and status bar */
  .layouts {
    display: flex;
    height: 14px;
    color: #222;
    background: #f6f6f6;
  }

  .steps {
    display: flex;
    width: 45px;
  }

  .steps button {
    width: 11px;
    border-right: 1px solid #bbb;
    font-size: 7px;
  }

  .layout {
    position: relative;
    z-index: 0;
    padding: 0 4px;
  }

  .layout::before {
    content: '';
    position: absolute;
    inset: 0;
    z-index: -1;
    border-right: 1px solid #555;
    transform: skewX(-20deg);
  }

  .layout.on {
    padding: 0 6px;
    color: #eee;
  }

  .layout.on::before {
    background: #1d232a;
  }

  .status {
    display: flex;
    align-items: stretch;
    height: 16px;
    color: #222;
    background: linear-gradient(#a2a2a2, #6f6f6f);
  }

  .status output {
    width: 130px;
    padding-left: 8px;
    line-height: 16px;
  }

  .toggles {
    display: flex;
    flex: 1;
  }

  .toggles button {
    box-sizing: border-box;
    display: flex;
    align-items: center;
    justify-content: center;
    width: 15px;
    border-right: 1px solid #888;
    background: #b4b4b4;
  }

  .toggles .on {
    background: #a6dbe4;
  }

  .modes {
    display: flex;
    align-items: center;
    margin-right: 6px;
    background: #b0b0b0;
  }

  .modes button {
    display: flex;
    align-items: center;
    height: 100%;
    padding: 0 1px;
    border-right: 1px solid #888;
  }

  .modes .scale {
    gap: 3px;
    padding-right: 8px;
  }

  .modes.end {
    margin-right: 0;
  }

  .modes .lit {
    padding: 0 5px;
    background: #7d7d7d;
  }

  .end .drop {
    margin: 0 3px;
  }
</style>
